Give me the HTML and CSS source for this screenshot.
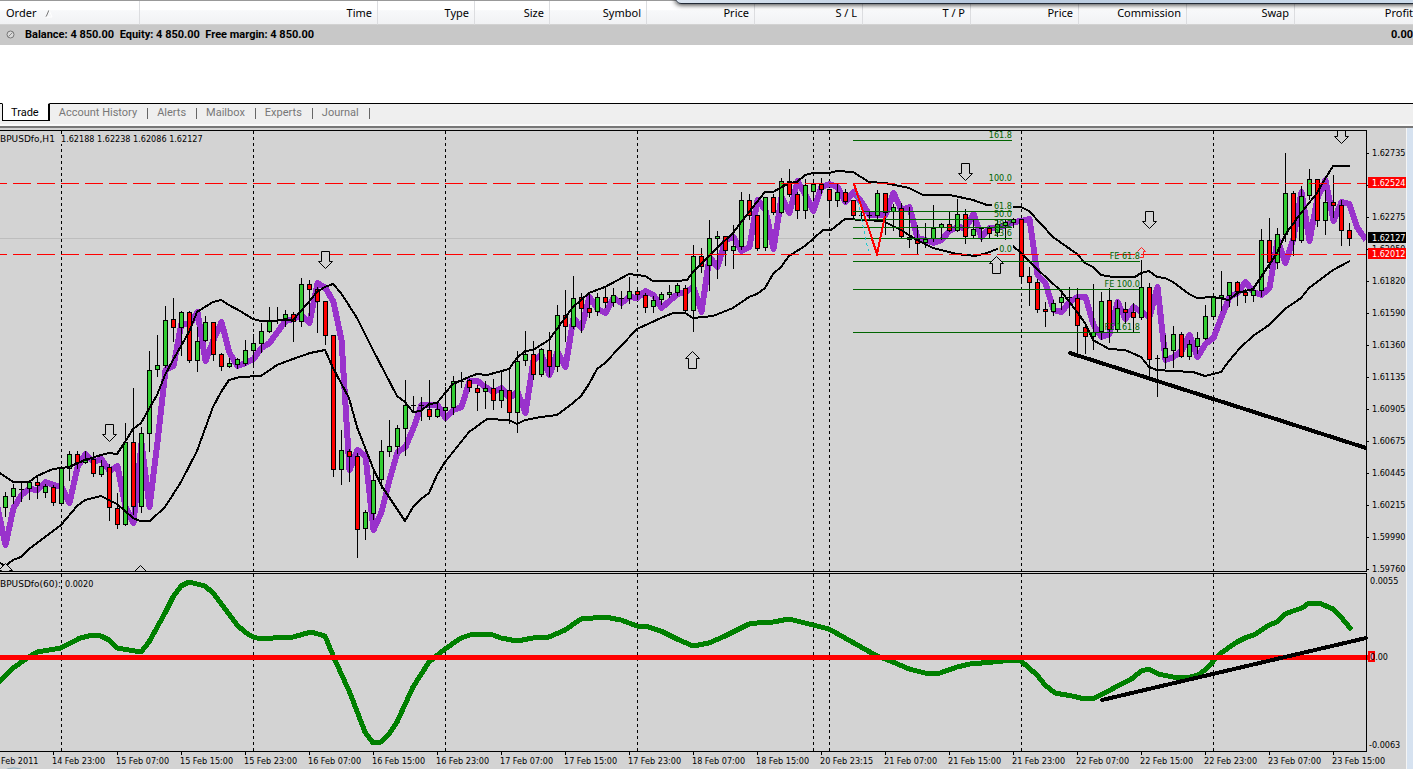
FILE: index.html
```html
<!DOCTYPE html>
<html lang="en">
<head>
<meta charset="utf-8">
<title>Trading terminal</title>
<link rel="stylesheet" href="styles.css">
</head>
<body>
<div class="popup-edge"></div>
<section class="terminal">
  <table class="orders">
    <colgroup>
      <col class="c-order"><col class="c-time"><col class="c-type"><col class="c-size"><col class="c-type"><col class="c-num"><col class="c-num"><col class="c-num"><col class="c-num"><col class="c-num"><col class="c-num"><col>
    </colgroup>
    <thead>
      <tr>
        <th class="first">Order <svg class="sort" width="8" height="9" viewBox="0 0 8 9"><path d="M1 8L4 1" stroke="#777" fill="none"/><path d="M4 1L7 8H1" stroke="#fff" fill="none"/></svg></th>
        <th>Time</th><th>Type</th><th>Size</th><th>Symbol</th><th>Price</th><th>S / L</th><th>T / P</th><th>Price</th><th>Commission</th><th>Swap</th><th class="last">Profit</th>
      </tr>
    </thead>
    <tbody>
      <tr>
        <td colspan="11" class="balance"><svg class="dot" width="9" height="9" viewBox="0 0 9 9"><circle cx="4.5" cy="4.5" r="3.5" fill="#d8d8d8" stroke="#777"/><path d="M2.5 6.5l4-4" stroke="#888"/></svg><span>Balance: 4 850.00&nbsp; Equity: 4 850.00&nbsp; Free margin: 4 850.00</span></td>
        <td class="last">0.00</td>
      </tr>
    </tbody>
  </table>
  <nav class="tabs">
    <button class="tab active">Trade</button>
    <button class="tab">Account History</button>
    <button class="tab">Alerts</button>
    <button class="tab">Mailbox</button>
    <button class="tab">Experts</button>
    <button class="tab">Journal</button>
  </nav>
</section>
<main class="workspace">
  <svg class="chart" id="chart" viewBox="0 128 1406 641"></svg>
</main>
<script src="chart.js"></script>
</body>
</html>
```
FILE: styles.css
```css
* { box-sizing: border-box; }

body {
  margin: 0;
  background: #fff;
  color: #000;
  font-family: "Noto Sans", "Open Sans", sans-serif;
  font-size: 11px;
  overflow: hidden;
}

.popup-edge {
  position: absolute;
  top: -8px;
  left: 675px;
  right: -8px;
  height: 12px;
  background: linear-gradient(90deg, #dbe5f0, #b8c9de 40%, #cddcec);
  border: 1px solid #222a35;
  border-radius: 6px;
  box-shadow: 0 1px 5px rgba(0, 0, 0, .8);
}

.terminal {
  display: flex;
  flex-direction: column;
  height: 128px;
  border-top: 1px solid #999;
  border-bottom: 2px solid #777;
}

.orders {
  width: 100%;
  table-layout: fixed;
  border-collapse: separate;
  border-spacing: 0;
}
.c-order { width: 140px; }
.c-time { width: 238px; }
.c-type { width: 97px; }
.c-size { width: 75px; }
.c-num { width: 108px; }

.orders th {
  height: 24px;
  padding: 0 5px 0 0;
  text-align: right;
  font-weight: 400;
  white-space: nowrap;
  background: linear-gradient(#fff 0, #fff 38%, #f7f8fa 42%, #f1f2f4 100%);
  border-right: 1px solid #dcdde0;
  border-bottom: 1px solid #d2d2d2;
}
.orders th.first {
  padding-left: 6px;
  text-align: left;
}
.orders .last {
  padding: 0;
  border-right: 0;
  text-align: right;
}
.orders td {
  height: 20px;
  padding: 0;
  background: #c8c8c8;
  font-family: Roboto, "Noto Sans", sans-serif;
  font-weight: 700;
  line-height: 20px;
}
.orders td.balance { padding-left: 6px; }
.sort { margin-left: 6px; vertical-align: -1px; }
.dot { margin-right: 10px; vertical-align: -1px; }

.tabs {
  display: flex;
  margin-top: auto;
  height: 23px;
  padding-left: 2px;
  background: #efefef;
  border-top: 1px solid #000;
  border-bottom: 2px solid #fafafa;
}
.tab {
  position: relative;
  height: 18px;
  margin: 0;
  padding: 0 11px 0 9px;
  border: 0;
  background: none;
  color: #777;
  font-family: Roboto, "Noto Sans", sans-serif;
  font-size: 11px;
  line-height: 18px;
}
.tab::after {
  content: "";
  position: absolute;
  top: 4px;
  right: 0;
  height: 11px;
  border-right: 1px solid #666;
}
.tab.active {
  margin-top: -1px;
  padding: 0 9px 0 8px;
  color: #000;
  background: #fff;
  border: 1px solid #000;
  border-top-color: #fff;
  border-right-width: 2px;
}
.tab.active::after { display: none; }

.workspace {
  background: #d6e2f0;
  padding-right: 6px;
}
.chart {
  display: block;
  width: 100%;
  background: #d3d3d3;
  border-right: 1px solid #f4f4f4;
}
.chart text {
  font-family: "DejaVu Sans Condensed", "DejaVu Sans", sans-serif;
  font-stretch: condensed;
  font-size: 9px;
}
.chart .symbol {
  font-family: "DejaVu Sans", sans-serif;
  font-stretch: normal;
}
.crisp { shape-rendering: crispEdges; }
.frame, .wick { stroke: #000; fill: none; }
.up { fill: #32cd32; stroke: #000; }
.down { fill: #f00; stroke: #000; }
.average { fill: none; stroke: #9932cc; stroke-width: 6; stroke-linejoin: round; }
.band { fill: none; stroke: #000; stroke-width: 2; }
.momentum { fill: none; stroke: #008000; stroke-width: 5; stroke-linejoin: round; stroke-linecap: round; }
.zero { stroke: #f00; stroke-width: 5; }
.trend { stroke: #000; stroke-width: 4; stroke-linecap: round; }
.separator { stroke: #000; stroke-dasharray: 3 3; }
.level { stroke: #f00; stroke-dasharray: 18 6; }
.bid { stroke: #bdbdbd; }
.fibo { stroke: #006400; }
.fibo-leg { fill: none; stroke: #f00; stroke-width: 2; }
.fibo-base { stroke: #20c8d0; stroke-dasharray: 3 3; }
.mask { fill: #d3d3d3; }
.arrow { fill: #d3d3d3; stroke: #000; }
.signal { fill: none; stroke: #f22; }
.chart .green { fill: #006400; text-anchor: end; }
.chart .light { fill: #fff; }
.tag-red { fill: #f00; }
.tag-black { fill: #000; }
.zero-tag { fill: #f9a0b8; stroke: #f00; stroke-width: 2; }
.hint { fill: none; stroke: #8ab; }
```
FILE: chart.js
```js
// Candles, 8px apart: [high, body top, body bottom, low, direction]
const candles = [
[492,496,508,516,1],[484,488,497,503,1],[483,489,489,501,0],[481,482,489,499,1],[476,482,486,498,-1],[484,486,493,497,1],[485,487,503,505,-1],[466,468,504,504,1],
[451,454,469,480,1],[451,454,463,468,-1],[451,459,463,463,1],[452,459,474,476,-1],[460,466,475,476,1],[464,467,508,520,-1],[493,508,525,528,-1],[423,442,525,525,1],
[388,442,507,514,-1],[427,433,507,512,1],[351,370,434,451,1],[335,365,370,376,1],[306,320,366,367,1],[298,319,328,341,-1],[311,312,328,355,1],[311,312,361,362,-1],
[327,341,361,371,1],[316,322,341,341,1],[322,322,355,360,-1],[353,354,367,370,-1],[358,363,367,367,1],[358,359,365,368,1],[340,350,364,365,1],[334,343,351,366,1],
[323,331,344,352,1],[307,320,332,332,1],[307,320,320,323,0],[310,314,319,326,1],[312,314,322,341,-1],[278,284,322,326,1],[280,284,290,315,-1],[287,289,302,332,-1],
[301,301,336,344,-1],[335,335,470,476,-1],[430,450,470,484,1],[449,451,457,481,-1],[453,456,530,557,-1],[510,512,529,539,1],[469,480,514,519,1],[440,451,480,488,1],
[420,446,452,456,1],[425,428,447,453,1],[380,405,429,455,1],[396,405,405,410,0],[397,405,405,420,0],[380,409,417,419,-1],[403,409,417,417,1],[387,407,411,420,1],
[376,381,408,414,1],[372,381,381,387,0],[379,380,388,391,-1],[385,388,393,410,-1],[381,388,392,408,1],[379,388,401,409,-1],[370,390,401,407,1],[369,390,413,423,-1],
[351,361,413,432,1],[331,354,361,365,1],[341,354,375,379,-1],[348,349,375,376,1],[332,350,367,376,-1],[305,315,367,371,1],[290,315,327,341,-1],[276,298,327,328,1],
[293,297,309,332,-1],[293,308,313,317,-1],[293,297,312,315,1],[288,297,303,307,-1],[288,295,303,306,1],[291,298,298,308,0],[277,291,299,303,1],[287,291,295,299,-1],
[293,295,308,312,-1],[296,300,307,312,1],[292,294,300,304,1],[285,292,295,297,1],[283,285,293,295,1],[285,288,311,311,-1],[245,256,311,331,1],[248,256,267,272,-1],
[220,238,266,290,1],[231,236,239,278,1],[236,236,251,265,-1],[225,246,251,268,1],[192,200,247,249,1],[194,200,216,219,-1],[215,215,249,250,-1],[197,197,248,250,1],
[194,197,213,214,-1],[178,181,213,213,1],[169,181,195,196,-1],[192,194,211,218,-1],[179,185,211,218,1],[182,184,192,200,1],[178,184,190,193,-1],[189,189,201,215,-1],
[183,192,201,206,1],[189,192,202,203,-1],[200,200,216,218,-1],[212,215,215,218,0],[211,215,215,219,0],[190,193,216,219,1],[193,193,213,234,-1],[204,207,212,230,1],
[203,208,237,237,-1],[207,237,240,247,-1],[225,239,244,253,-1],[223,239,243,247,1],[205,228,239,241,1],[223,224,228,239,1],[212,224,231,231,-1],[199,214,231,231,1],
[209,214,237,243,-1],[219,229,236,238,1],[227,228,228,241,0],[226,228,234,237,-1],[220,224,233,236,1],[220,222,226,239,1],[218,219,223,227,1],[219,219,277,281,-1],
[267,276,283,305,-1],[279,282,310,312,-1],[302,309,312,326,-1],[300,303,312,315,1],[290,297,303,309,1],[287,297,297,315,0],[288,298,326,352,-1],[325,327,337,353,-1],
[284,332,337,349,1],[292,301,332,339,1],[288,300,330,342,-1],[300,308,330,332,1],[302,309,313,323,-1],[303,312,318,332,-1],[260,287,318,319,1],[283,287,360,380,-1],
[355,358,358,396,0],[335,348,358,368,1],[326,334,351,367,1],[332,334,357,357,-1],[340,344,357,359,1],[332,338,347,353,1],[305,316,339,339,1],[297,297,317,317,1],
[271,295,298,310,1],[282,282,296,306,1],[281,282,292,305,-1],[289,292,296,302,-1],[287,290,296,301,1],[229,240,291,296,1],[218,240,263,268,-1],[228,234,263,268,1],
[153,193,235,241,1],[191,193,241,255,-1],[186,196,241,242,1],[169,179,196,199,1],[179,179,221,226,-1],[190,202,221,234,1],[175,202,206,217,-1],[200,205,231,245,-1],
[223,230,239,245,-1]
];

// Moving average sampled at every candle, starting left of the window
const average = [545,508,495,489,490,482,485,487,503,467,454,462,459,471,466,507,523,443,507,442,370,366,323,325,312,361,340,322,353,366,363,359,348,343,332,321,319,315,323,283,288,302,340,470,450,456,530,512,480,452,447,428,405,405,405,418,410,407,381,381,387,392,388,398,392,413,360,355,375,352,367,318,328,297,309,313,298,303,297,298,291,295,308,301,294,292,287,312,257,267,240,237,251,247,200,210,249,197,213,181,195,211,187,184,187,202,192,202,215,215,215,193,210,207,238,240,243,240,231,227,228,214,237,228,228,225,222,221,219,275,283,310,312,302,297,297,325,337,334,302,319,307,312,317,287,360,357,351,335,357,344,338,317,297,293,282,292,295,288,240,263,238,192,241,198,180,221,202,204,228,240];

const upper = "0,473 13,482 29,482 37,476 53,469 69,467 85,460 101,455 109,453 117,454 125,442 133,429 141,423 149,409 157,395 165,375 173,360 189,332 197,312 213,302 221,300 229,305 240,311 253,319 261,321 293,320 301,311 317,292 325,287 333,284 341,293 357,318 373,350 397,396 405,402 413,412 421,411 429,404 437,403 445,393 453,384 469,377 477,374 487,375 509,369 517,358 525,351 533,350 549,340 565,318 573,307 589,293 605,287 629,274 645,276 653,281 677,281 687,280 693,272 717,248 733,233 749,212 765,192 773,192 789,183 797,182 805,175 813,173 829,173 837,171 853,172 869,182 885,183 909,188 923,195 950,195 973,200 987,205 1013,207 1021,207 1029,211 1053,237 1077,254 1085,263 1093,267 1101,275 1113,277 1135,277 1141,273 1149,271 1157,277 1165,278 1173,282 1189,294 1197,298 1213,297 1229,300 1237,293 1253,289 1269,265 1277,253 1285,235 1301,213 1317,193 1325,179 1333,166 1350,166";
const lower = "0,563 5,566 13,560 21,557 29,549 61,525 77,506 85,500 101,496 117,504 133,518 140,521 150,521 165,507 181,482 197,451 213,407 221,392 229,380 240,377 261,376 277,365 293,359 310,353 325,350 333,368 349,398 357,427 373,468 381,485 405,521 413,507 421,499 429,493 437,475 445,462 469,432 487,419 509,420 517,424 525,420 541,417 557,415 573,403 581,396 589,384 597,369 605,363 637,329 661,318 673,313 685,313 693,318 713,316 733,308 749,297 757,294 765,288 773,274 781,267 789,256 805,246 823,230 831,230 845,219 883,221 901,230 917,240 933,248 957,254 975,256 987,253 997,249 1013,246 1021,253 1037,269 1061,291 1077,312 1085,323 1093,340 1109,349 1125,350 1141,357 1149,367 1157,370 1173,371 1193,372 1205,376 1221,372 1229,361 1240,348 1253,336 1269,325 1285,309 1301,298 1309,288 1333,270 1350,261";
const momentum = "0,681 13,668 29,657 37,652 61,648 80,638 93,635 101,636 109,640 117,648 141,652 149,642 165,613 173,597 181,586 189,582 205,586 213,593 229,614 237,625 245,632 253,637 261,639 273,638 285,637 293,637 311,632 325,636 335,660 350,693 365,732 373,743 381,742 389,734 397,722 413,687 429,662 445,649 461,638 470,635 480,634 493,635 501,638 517,641 533,638 549,637 565,630 581,619 605,617 621,620 637,626 645,626 661,631 677,639 693,646 709,643 725,636 749,624 765,622 773,622 789,619 813,625 829,629 845,638 861,647 877,656 893,662 909,669 925,673 940,673 957,667 970,664 993,662 1013,660 1021,661 1037,675 1045,685 1055,693 1072,696 1085,699 1095,698 1133,678 1141,671 1149,669 1158,674 1173,677 1190,677 1198,675 1205,670 1221,653 1237,642 1247,637 1254,635 1269,625 1277,622 1285,614 1293,611 1302,608 1309,603 1319,603 1333,609 1341,617 1350,628";

const line = (cls, x1, y1, x2, y2) => `<line class="${cls}" x1="${x1}" y1="${y1}" x2="${x2}" y2="${y2}"/>`;
const text = (x, y, s, cls = "") => `<text class="${cls}" x="${x}" y="${y}">${s}</text>`;
const poly = (cls, pts) => `<polyline class="${cls}" points="${pts}"/>`;
const out = [];

out.push('<defs><clipPath id="pane"><rect x="0" y="131" width="1366" height="440"/></clipPath></defs>');

out.push('<g class="crisp">');
for (const x of [61, 253, 445, 637, 813, 829, 1021, 1213]) {
  out.push(line("separator", x + .5, 131, x + .5, 571), line("separator", x + .5, 574, x + .5, 751));
}
out.push(line("bid", 0, 238.5, 1366, 238.5));
out.push('</g><g class="crisp" clip-path="url(#pane)">');
out.push(poly("average", "-3,505 " + average.map((y, i) => `${i === average.length - 1 ? 1366 : 5.5 + 8 * i},${y}`).join(" ")));
candles.forEach(([high, top, bottom, low, dir], i) => {
  const x = 5.5 + 8 * i;
  out.push(line("wick", x, high, x, low + 1));
  if (dir === 0) out.push(line("wick", x - 2.5, top + .5, x + 2.5, top + .5));
  else out.push(`<rect class="${dir > 0 ? "up" : "down"}" x="${x - 2}" y="${top + .5}" width="4" height="${Math.max(bottom - top - 1, 2)}"/>`);
});
out.push(poly("band", upper), poly("band", lower));
out.push(line("level", -11, 183.5, 1366, 183.5), line("level", -11, 254.5, 1366, 254.5));
for (const y of [140, 211, 219, 227, 238]) out.push(line("fibo", 853, y + .5, 1012, y + .5));
for (const y of [261, 289, 332]) out.push(line("fibo", 853, y + .5, 1140, y + .5));
out.push(line("fibo-base", 854, 184, 869, 254), poly("fibo-leg", "854,184 877,254 885,216"));
out.push(line("trend", 1070, 353, 1366, 448));
out.push('</g>');

out.push('<rect class="mask" x="992" y="202" width="21" height="8"/><rect class="mask" x="998" y="244" width="15" height="9"/>');
for (const [y, s] of [[138, "161.8"], [181, "100.0"], [209, "61.8"], [217, "50.0"], [227, "38.2"], [236, "23.6"], [252, "0.0"]]) out.push(text(1012, y, s, "green"));
for (const [y, s] of [[259, "FE 61.8"], [287, "FE 100.0"], [330, "FE 161.8"]]) out.push(text(1140, y, s, "green"));
out.push('<path class="signal" d="M1137.500 251.500L1141.500 247.500L1145.500 251.500H1143.500V257.500H1139.500"/>');

// Block arrows, placed by their tips
const arrow = (x, y, d) => `<path class="arrow" d="M${x + .5} ${y}l7 ${-7 * d}h-3v${-10 * d}h-8v${10 * d}h-3z"/>`;
out.push('<g clip-path="url(#pane)">');
for (const [x, y] of [[109, 441], [325, 268], [965, 180], [1149, 228], [1341, 143]]) out.push(arrow(x, y + .5, 1));
for (const [x, y] of [[692, 351], [996, 256], [140, 565], [5, 563]]) out.push(arrow(x, y + .5, -1));
out.push('</g>');

out.push('<g class="crisp">', poly("momentum", momentum), line("zero", 0, 657.5, 1368, 657.5), line("trend", 1102, 700, 1366, 638));
out.push('<path class="frame" d="M0 130.500H1366.500V571.500H0M0 573.500H1366.500V751.500H0"/>');
for (let x = 53; x < 1366; x += 64) out.push(line("wick", x + .5, 751, x + .5, 755));
const prices = ["1.62735", "", "1.62275", "1.62050", "1.61820", "1.61590", "1.61360", "1.61135", "1.60905", "1.60675", "1.60445", "1.60215", "1.59990", "1.59760"];
prices.forEach((p, i) => out.push(line("wick", 1366, 153.5 + 32 * i, 1369, 153.5 + 32 * i)));
out.push('</g>');
prices.forEach((p, i) => { if (p) out.push(text(1372, 156 + 32 * i, p)); });

out.push('<rect class="tag-red" x="1368" y="177" width="38" height="11"/><rect class="tag-red" x="1368" y="248" width="38" height="11"/><rect class="tag-black" x="1368" y="232" width="38" height="11"/>');
out.push(text(1372, 186, "1.62524", "light"), text(1372, 241, "1.62127", "light"), text(1372, 257, "1.62012", "light"));
out.push('<rect class="zero-tag" x="1369" y="652" width="5" height="9"/>', text(1370, 660, "0.00"), text(1370, 584, "0.0055"), text(1369, 748, "-0.0063"));

out.push('<rect class="mask" x="60" y="134" width="3" height="10"/>');
out.push(text(0, 142, "BPUSDfo,H1", "symbol"), text(61, 142, "1.62188 1.62238 1.62086 1.62127"), text(0, 587, "BPUSDfo(60):", "symbol"), text(65, 587, "0.0020"));

const times = ["14 Feb 23:00", "15 Feb 07:00", "15 Feb 15:00", "15 Feb 23:00", "16 Feb 07:00", "16 Feb 15:00", "16 Feb 23:00", "17 Feb 07:00", "17 Feb 15:00", "17 Feb 23:00", "18 Feb 07:00", "18 Feb 15:00", "20 Feb 23:15", "21 Feb 07:00", "21 Feb 15:00", "21 Feb 23:00", "22 Feb 07:00", "22 Feb 15:00", "22 Feb 23:00", "23 Feb 07:00", "23 Feb 15:00"];
out.push(text(1, 764, "Feb 2011"));
times.forEach((t, i) => out.push(text(52 + 64 * i, 764, t)));
out.push('<ellipse class="hint" cx="14" cy="774" rx="12" ry="6"/>');

document.getElementById("chart").innerHTML = out.join("");
```
